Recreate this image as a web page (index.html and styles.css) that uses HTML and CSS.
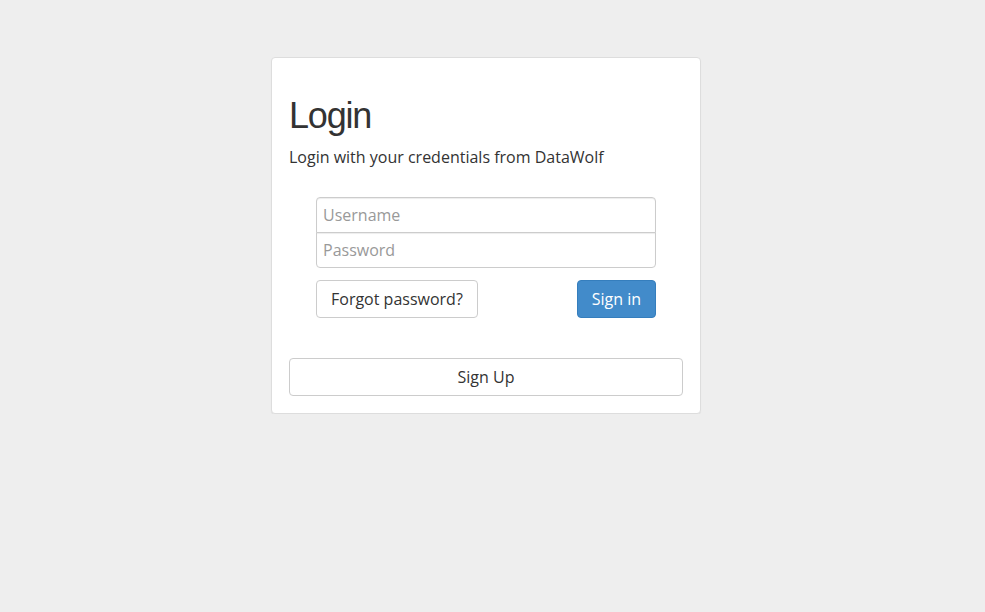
FILE: index.html
```html
<!DOCTYPE html>
<html lang="en">
<head>
<meta charset="utf-8">
<title>Login</title>
<link rel="stylesheet" href="styles.css">
</head>
<body>
<main class="page">
  <section class="card">
    <h1 class="title">Login</h1>
    <p class="subtitle">Login with your credentials from DataWolf</p>
    <form class="form">
      <div class="stack">
        <input class="field field-top" type="text" placeholder="Username">
        <input class="field field-bottom" type="password" placeholder="Password">
      </div>
      <div class="actions">
        <button type="button" class="btn btn-default">Forgot password?</button>
        <button type="submit" class="btn btn-primary">Sign in</button>
      </div>
    </form>
    <button type="button" class="btn btn-default btn-block">Sign Up</button>
  </section>
</main>
</body>
</html>
```

FILE: styles.css
```css
* { box-sizing: border-box; }
html, body { margin: 0; padding: 0; }
body {
  background: #eeeeee;
  font-family: "Open Sans", "Liberation Sans", sans-serif;
  font-size: 16px;
  line-height: 1.42857;
  color: #333333;
}
.page {
  display: flex;
  justify-content: center;
  padding: 57px 13px 0 0;
}
.card {
  width: 430px;
  background: #ffffff;
  border: 1px solid #dddddd;
  border-radius: 4px;
  padding: 17px;
  box-shadow: 0 1px 1px rgba(0,0,0,0.05);
}
.title {
  font-family: "Liberation Sans", Arial, sans-serif;
  font-weight: 400;
  font-size: 36px;
  letter-spacing: -1.2px;
  line-height: 1.1;
  margin: 21px 0 10px;
  color: #333333;
}
.subtitle {
  margin: 0;
}
.form {
  width: 340px;
  margin: 29px auto 0;
}
.stack {
  display: flex;
  flex-direction: column;
}
.field {
  height: 36px;
  width: 100%;
  border: 1px solid #cccccc;
  padding: 0 6px;
  font-family: "Open Sans", sans-serif;
  font-size: 16px;
  color: #555555;
  background: #fff;
  outline: none;
  box-shadow: inset 0 1px 1px rgba(0,0,0,0.075);
}
.field::placeholder { color: #999999; }
.field-top { border-radius: 4px 4px 0 0; }
.field-bottom { border-radius: 0 0 4px 4px; margin-top: -1px; }
.actions {
  display: flex;
  justify-content: space-between;
  margin-top: 12px;
}
.btn {
  height: 38px;
  font-family: "Open Sans", sans-serif;
  font-size: 16px;
  line-height: 1;
  padding: 0 14px;
  border-radius: 4px;
  border: 1px solid #cccccc;
  cursor: pointer;
}
.btn-default {
  background: #ffffff;
  color: #333333;
}
.btn-primary {
  background: #428bca;
  border-color: #357ebd;
  color: #ffffff;
}
.btn-block {
  display: block;
  width: 100%;
  margin-top: 40px;
}
```
